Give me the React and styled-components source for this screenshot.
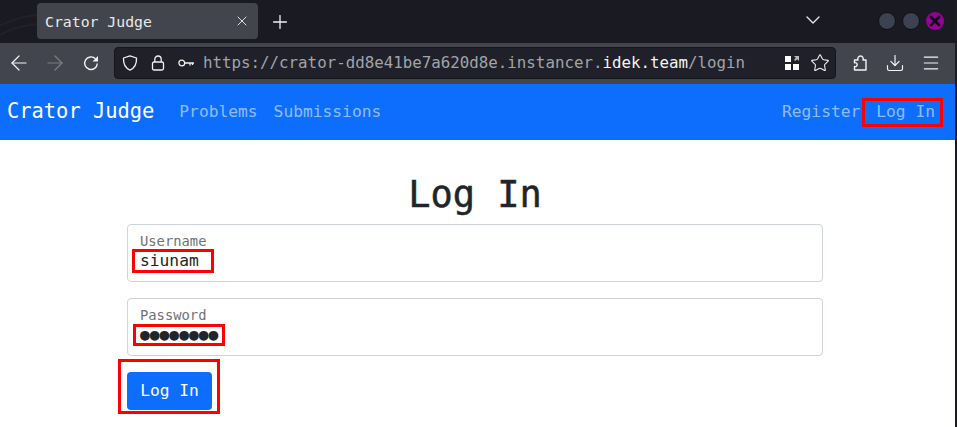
import React from 'react'
import styled, { createGlobalStyle } from 'styled-components'
import { ArrowLeft, ArrowRight, ChevronDown, Download, Menu, Plus, Star, X } from 'lucide-react'

const mono = '"DejaVu Sans Mono", "Liberation Mono", monospace'

const GlobalStyle = createGlobalStyle`
  html, body { margin: 0; padding: 0; background: #1c1d24; }
  * { box-sizing: border-box; }
`

const Window = styled.div`
  width: 957px;
  height: 427px;
  overflow: hidden;
  padding-right: 2px;
  background: #1c1d24;
  font-family: ${mono};
  display: flex;
  flex-direction: column;
`

const TabStrip = styled.div`
  position: relative;
  height: 43px;
  flex: none;
  display: flex;
  align-items: flex-start;
  background: #1a1b22;
  padding: 3px 0 0 37px;
`

const Swirl = styled.svg`
  position: absolute;
  left: 0;
  top: 0;
`

const Tab = styled.div`
  position: relative;
  width: 221px;
  height: 36px;
  border-radius: 4px;
  background: #42454d;
  color: #e8e9ea;
  font-size: 14.8px;
  display: flex;
  align-items: center;
  justify-content: space-between;
  padding: 0 8px 0 8px;
`

const NewTab = styled.div`
  color: #f2f2f3;
  margin: 8px 0 0 11px;
  display: flex;
`

const Chevron = styled.div`
  color: #e6e6e8;
  margin: 5px 0 0 auto;
  display: flex;
`

const WindowButtons = styled.div`
  display: flex;
  gap: 6px;
  align-items: center;
  margin: 9px 11px 0 53px;
`

const WindowDot = styled.div`
  width: 18px;
  height: 18px;
  border-radius: 50%;
  border: ${props => (props.$close ? 'none' : '1px solid #0e0f13')};
  background: ${props => (props.$close ? '#95009a' : '#3c4252')};
  color: #0a0a0a;
  display: flex;
  align-items: center;
  justify-content: center;
`

const Toolbar = styled.div`
  height: 41px;
  flex: none;
  display: flex;
  align-items: center;
  gap: 12px;
  background: #42454d;
  color: #f4f4f5;
  padding: 0 0 1px 7px;
`

const NavIcon = styled.div`
  display: flex;
  width: 24px;
  height: 24px;
  align-items: center;
  justify-content: center;
  color: ${props => (props.$dim ? '#7d7f85' : '#f4f4f5')};
`

const UrlBar = styled.div`
  width: 722px;
  height: 32px;
  margin: 0 3px 0 -1px;
  display: flex;
  align-items: center;
  background: #1f2029;
  border: 1px solid #15161b;
  border-radius: 4px;
  padding: 0 5px 0 7px;
`

const UrlIcon = styled.div`
  display: flex;
  margin-right: ${props => props.$gap || 0}px;
  color: #f0f0f2;
`

const Url = styled.div`
  font-size: 15.8px;
  color: #a2a4a9;
  white-space: nowrap;
  flex: 1;
  padding-bottom: 1px;
  b {
    color: #f4f4f5;
    font-weight: normal;
  }
`

const ToolIcons = styled.div`
  display: flex;
  align-items: center;
  gap: 16px;
`

const Navbar = styled.nav`
  height: 56px;
  flex: none;
  display: flex;
  align-items: center;
  background: #0d6efd;
  padding: 0 12px 2px 7px;
`

const Brand = styled.div`
  font-size: 20.4px;
  color: #fff;
  margin-right: 17px;
`

const NavLink = styled.a`
  position: relative;
  font-size: 16.25px;
  padding: 0 8px;
  color: rgba(255, 255, 255, 0.55);
  margin-left: ${props => (props.$push ? 'auto' : '0')};
  &[data-marked='true']::after {
    content: '';
    position: absolute;
    inset: -4px 0 -6px -6px;
    border: 3px solid #f00;
  }
`

const Page = styled.main`
  flex: 1;
  background: #fff;
  display: flex;
  flex-direction: column;
  padding: 0 132px 0 127px;
  color: #212529;
`

const Title = styled.h1`
  margin: 31px 0 5px;
  font-size: 37px;
  font-weight: normal;
  -webkit-text-stroke: 0.5px #212529;
  line-height: 48px;
  text-align: center;
`

const Field = styled.div`
  height: 58px;
  margin-bottom: 16px;
  border: 1px solid #ced4da;
  border-radius: 4px;
  padding: 7px 12px 0;
`

const FieldLabel = styled.div`
  font-size: 13.8px;
  line-height: 19px;
  padding-bottom: 1px;
  height: 19px;
  color: #6f7276;
`

const Marked = styled.span`
  position: relative;
  display: inline-block;
  font-size: 16.25px;
  line-height: 20px;
  &::after {
    content: '';
    position: absolute;
    top: ${props => props.$y}px;
    bottom: ${props => props.$y}px;
    left: ${props => props.$left}px;
    right: ${props => props.$right}px;
    border: 3px solid #f00;
  }
`

const SubmitWrap = styled.div`
  position: relative;
  align-self: flex-start;
  &::after {
    content: '';
    position: absolute;
    inset: -13px -8px -4px -9px;
    border: 3px solid #f00;
  }
`

const SubmitButton = styled.button`
  display: block;
  width: 85px;
  height: 38px;
  border: none;
  border-radius: 4px;
  padding: 0 0 2px;
  background: #0d6efd;
  color: #fff;
  font-family: ${mono};
  font-size: 16.25px;
`

const ReloadIcon = () => (
  <svg width="16" height="16" viewBox="0 0 16 16" fill="none" stroke="currentColor" strokeWidth="1.4">
    <path d="M12.500 3.800A6.300 6.300 0 1 0 14.300 8.500" />
    <path d="M15 1v5.500H9.500z" fill="currentColor" stroke="none" />
  </svg>
)

const ShieldIcon = () => (
  <svg width="16" height="16" viewBox="0 0 16 16" fill="none" stroke="currentColor" strokeWidth="1.3" strokeLinejoin="round">
    <path d="M8 .9 14.500 3c.3 5.700-1.500 9.900-6.500 12.100C3 12.900 1.200 8.700 1.500 3z" />
  </svg>
)

const LockIcon = () => (
  <svg width="16" height="16" viewBox="0 0 16 16" fill="none" stroke="currentColor" strokeWidth="1.3">
    <rect x="2.500" y="7" width="11" height="8" rx="1.500" />
    <path d="M4.800 7V4.200a3.200 3.200 0 0 1 6.400 0V7" />
  </svg>
)

const KeyIcon = () => (
  <svg width="16" height="16" viewBox="0 0 16 16" fill="none" stroke="currentColor" strokeWidth="1.3">
    <circle cx="3.800" cy="8" r="2.900" />
    <path d="M6.700 8H16M12 8v2.500M14.500 8v2" />
  </svg>
)

const GridIcon = () => (
  <svg width="16" height="16" viewBox="0 0 16 16" fill="#fff">
    <rect x="1" y="1" width="6" height="6" />
    <rect x="1" y="9" width="6" height="6" />
    <rect x="9" y="9" width="6" height="6" />
    <path d="M10 1h5v5l-1.800-1.800-1.900 1.900-1.300-1.300 1.900-1.900z" fill="#b9babd" />
  </svg>
)

const PuzzleIcon = () => (
  <svg width="18" height="18" viewBox="0 0 18 18" fill="none" stroke="currentColor" strokeWidth="1.4" strokeLinejoin="round">
    <path d="M3.500 16v-3.500c1.500.4 2.700-.5 2.700-1.900S5 8.300 3.500 8.700V6H7c-.7-2 .4-4 2.500-4S12.700 4 12 6h3v10z" />
  </svg>
)

const App = () => (
  <Window>
    <GlobalStyle />
    <TabStrip>
      <Swirl width="40" height="43" viewBox="0 0 40 43" fill="none" stroke="#212229" strokeWidth="2">
        <path d="M0 26C12 19 24 16 38 15" />
        <path d="M0 35C12 28 24 25 38 24" />
      </Swirl>
      <Tab>
        Crator Judge
        <X size={16} strokeWidth={1.4} />
      </Tab>
      <NewTab><Plus size={22} strokeWidth={1.4} /></NewTab>
      <Chevron><ChevronDown size={24} strokeWidth={1.4} /></Chevron>
      <WindowButtons>
        <WindowDot />
        <WindowDot />
        <WindowDot $close><X size={16} strokeWidth={4} /></WindowDot>
      </WindowButtons>
    </TabStrip>
    <Toolbar>
      <NavIcon><ArrowLeft size={24} strokeWidth={1.2} /></NavIcon>
      <NavIcon $dim><ArrowRight size={24} strokeWidth={1.2} /></NavIcon>
      <NavIcon><ReloadIcon /></NavIcon>
      <UrlBar>
        <UrlIcon $gap={12}><ShieldIcon /></UrlIcon>
        <UrlIcon $gap={12}><LockIcon /></UrlIcon>
        <UrlIcon $gap={9}><KeyIcon /></UrlIcon>
        <Url>https://crator-dd8e41be7a620d8e.instancer.<b>idek.team</b>/login</Url>
        <UrlIcon $gap={10}><GridIcon /></UrlIcon>
        <UrlIcon><Star size={20} strokeWidth={1.3} /></UrlIcon>
      </UrlBar>
      <ToolIcons>
        <PuzzleIcon />
        <Download size={20} strokeWidth={1.4} />
        <Menu size={20} strokeWidth={1.4} />
      </ToolIcons>
    </Toolbar>
    <Navbar>
      <Brand>Crator Judge</Brand>
      <NavLink>Problems</NavLink>
      <NavLink>Submissions</NavLink>
      <NavLink $push>Register</NavLink>
      <NavLink data-marked="true">Log In</NavLink>
    </Navbar>
    <Page>
      <Title>Log In</Title>
      <Field>
        <FieldLabel>Username</FieldLabel>
        <Marked $y={-2} $left={-8} $right={-15}>siunam</Marked>
      </Field>
      <Field>
        <FieldLabel>Password</FieldLabel>
        <Marked $y={-1} $left={-7} $right={-7}>●●●●●●●●</Marked>
      </Field>
      <SubmitWrap>
        <SubmitButton>Log In</SubmitButton>
      </SubmitWrap>
    </Page>
  </Window>
)

export default App
